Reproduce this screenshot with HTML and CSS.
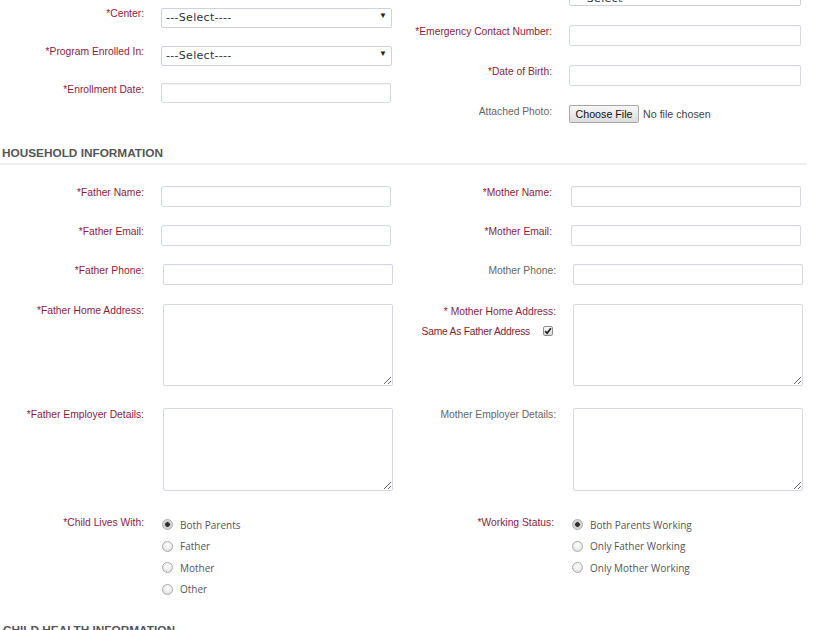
FILE: index.html
```html
<!DOCTYPE html>
<html lang="en">
<head>
<meta charset="utf-8">
<title>Enrollment Form</title>
<link rel="stylesheet" href="styles.css">
</head>
<body>
<div class="page">
  <section class="top">
    <div class="col col-l">
      <div class="field f-l">
        <label class="lbl">*Center:</label>
        <div class="select"><select><option>---Select----</option></select></div>
      </div>
      <div class="field f-l">
        <label class="lbl">*Program Enrolled In:</label>
        <div class="select"><select><option>---Select----</option></select></div>
      </div>
      <div class="field f-l">
        <label class="lbl">*Enrollment Date:</label>
        <input class="input h20" type="text">
      </div>
    </div>
    <div class="col col-r">
      <div class="field f-rt">
        <label class="lbl"></label>
        <div class="select wide low"><select><option>---Select----</option></select></div>
      </div>
      <div class="field f-rt">
        <label class="lbl">*Emergency Contact Number:</label>
        <input class="input wide" type="text">
      </div>
      <div class="field f-rt">
        <label class="lbl">*Date of Birth:</label>
        <input class="input wide" type="text">
      </div>
      <div class="field f-rt">
        <label class="lbl opt">Attached Photo:</label>
        <div class="file">
          <button class="file-btn" type="button">Choose File</button>
          <span class="file-none">No file chosen</span>
        </div>
      </div>
    </div>
  </section>

  <h3 class="sec-title">HOUSEHOLD INFORMATION</h3>

  <section class="household">
    <div class="pair p-name">
      <div class="field f-l"><label class="lbl">*Father Name:</label><input class="input" type="text"></div>
      <div class="field f-rn"><label class="lbl">*Mother Name:</label><input class="input" type="text"></div>
    </div>
    <div class="pair p-email">
      <div class="field f-l"><label class="lbl">*Father Email:</label><input class="input" type="text"></div>
      <div class="field f-rn"><label class="lbl">*Mother Email:</label><input class="input" type="text"></div>
    </div>
    <div class="pair p-phone">
      <div class="field f-l2"><label class="lbl">*Father Phone:</label><input class="input" type="text"></div>
      <div class="field f-rp"><label class="lbl opt">Mother Phone:</label><input class="input" type="text"></div>
    </div>
    <div class="pair p-addr">
      <div class="field f-l2"><label class="lbl">*Father Home Address:</label><textarea class="ta"></textarea></div>
      <div class="field f-rp">
        <div class="lbl lbl-stack">
          <label>* Mother Home Address:</label>
          <div class="same">
            <span>Same As Father Address</span>
            <span class="chk" role="checkbox" aria-checked="true"><svg width="8" height="8" viewBox="0 0 8 8"><path d="M1.2 4.1 L3.1 6.2 L6.9 1.2" fill="none" stroke="#1e1e1e" stroke-width="1.7"/></svg></span>
          </div>
        </div>
        <textarea class="ta"></textarea>
      </div>
    </div>
    <div class="pair p-emp">
      <div class="field f-l2"><label class="lbl">*Father Employer Details:</label><textarea class="ta ta-emp"></textarea></div>
      <div class="field f-rp"><label class="lbl opt">Mother Employer Details:</label><textarea class="ta ta-emp"></textarea></div>
    </div>
    <div class="pair p-status">
      <div class="field f-ls">
        <label class="lbl">*Child Lives With:</label>
        <div class="radios">
          <label class="ropt"><input type="radio" name="lives" checked><span>Both Parents</span></label>
          <label class="ropt"><input type="radio" name="lives"><span>Father</span></label>
          <label class="ropt"><input type="radio" name="lives"><span>Mother</span></label>
          <label class="ropt"><input type="radio" name="lives"><span>Other</span></label>
        </div>
      </div>
      <div class="field f-rs">
        <label class="lbl">*Working Status:</label>
        <div class="radios">
          <label class="ropt"><input type="radio" name="work" checked><span>Both Parents Working</span></label>
          <label class="ropt"><input type="radio" name="work"><span>Only Father Working</span></label>
          <label class="ropt"><input type="radio" name="work"><span>Only Mother Working</span></label>
        </div>
      </div>
    </div>
  </section>

  <h3 class="sec-title sec-next">CHILD HEALTH INFORMATION</h3>
</div>
</body>
</html>
```

FILE: styles.css
```css
* { box-sizing: border-box; }

html, body {
  margin: 0;
  background: #fff;
  font-family: "Liberation Sans", Arial, sans-serif;
}

.page {
  width: 825px;
  height: 630px;
  overflow: hidden;
  padding-top: 7px;
}

/* ---------- top section ---------- */
.top {
  display: flex;
  align-items: flex-start;
}

.col {
  display: flex;
  flex-direction: column;
}

.col-l {
  width: 410px;
  flex: none;
  gap: 18px;
}

.col-r {
  margin-top: -21px;
  gap: 19px;
}

/* ---------- field rows ---------- */
.field {
  display: flex;
  align-items: flex-start;
}

.lbl {
  flex: none;
  text-align: right;
  font-size: 10.3px;
  line-height: 12px;
  padding-top: 1px;
  color: #8c1c3c;
  white-space: nowrap;
}

.lbl.opt { color: #666; }

.f-l  { gap: 17px; }
.f-l  > .lbl { width: 144px; }
.f-l2 { gap: 19px; }
.f-l2 > .lbl { width: 144px; }
.f-ls { gap: 18px; }
.f-ls > .lbl { width: 144px; }

.f-rt { gap: 17px; }
.f-rt > .lbl { width: 142px; }
.f-rn { gap: 19px; }
.f-rn > .lbl { width: 142px; }
.f-rp { gap: 17px; }
.f-rp > .lbl { width: 146px; }
.f-rs { gap: 18px; }
.f-rs > .lbl { width: 144px; }

/* ---------- controls ---------- */
.input {
  width: 230px;
  height: 21px;
  margin: 0;
  padding: 2px 4px;
  border: 1px solid #d3d8e2;
  border-radius: 2px;
  background: #fff;
  box-shadow: inset 0 1px 1px rgba(0, 0, 0, 0.03);
  font: 11px "Liberation Sans", Arial, sans-serif;
}

.input.h20 { height: 20px; }
.input.wide { width: 232px; }

.select {
  position: relative;
  width: 231px;
  height: 20px;
}

.select.wide { width: 232px; }

.select select {
  appearance: none;
  -webkit-appearance: none;
  width: 100%;
  height: 100%;
  margin: 0;
  padding: 0 0 0 4px;
  border: 1px solid #cdd1da;
  border-radius: 2px;
  background: #fff;
  color: #333;
  font: 11px "DejaVu Sans", Verdana, sans-serif;
  letter-spacing: 0.3px;
}

.select.low select {
  padding-top: 5px;
}

.select::after {
  content: "\25BC";
  position: absolute;
  right: 5px;
  top: 5px;
  font-size: 8px;
  line-height: 8px;
  color: #222;
  pointer-events: none;
}

.select.low::after { content: none; }

.file {
  display: flex;
  align-items: center;
  gap: 4px;
}

.file-btn {
  width: 70px;
  height: 18px;
  margin: 0;
  padding: 0;
  border: 1px solid #a6a6a6;
  border-radius: 2px;
  background: linear-gradient(#f7f7f7, #dddddd);
  color: #111;
  font: 10.7px "Liberation Sans", Arial, sans-serif;
}

.file-none {
  font-size: 10.7px;
  color: #444;
}

.ta {
  width: 230px;
  height: 82px;
  margin: 0;
  padding: 2px 4px;
  border: 1px solid #d3d8e2;
  border-radius: 2px;
  background: #fff;
  font: 11px "Liberation Sans", Arial, sans-serif;
}

.ta-emp { height: 83px; }

/* ---------- headings ---------- */
.sec-title {
  width: 807px;
  margin: 23px 0 0;
  padding: 0 0 3px 2px;
  font: bold 11.8px/14px "Liberation Sans", Arial, sans-serif;
  color: #555;
  border-bottom: 2px solid #f0f0f0;
}

.sec-next {
  padding-left: 3px;
}

/* ---------- household rows ---------- */
.pair {
  display: grid;
  grid-template-columns: 410px 1fr;
}

.p-name   { margin-top: 21px; }
.p-email  { margin-top: 18px; }
.p-phone  { margin-top: 18px; }
.p-addr   { margin-top: 19px; }
.p-emp    { margin-top: 22px; }
.p-status { margin-top: 23px; }

.p-status .lbl { padding-top: 3px; }

.lbl-stack {
  display: flex;
  flex-direction: column;
  align-items: flex-end;
  padding-top: 2px;
}

.same {
  display: flex;
  align-items: center;
  margin-top: 8px;
  font-size: 10.3px;
  letter-spacing: -0.25px;
  color: #7e1f33;
}

.chk {
  display: inline-flex;
  align-items: center;
  justify-content: center;
  width: 10px;
  height: 10px;
  margin: -2px 3px 0 13px;
  border: 1px solid #8d8d8d;
  border-radius: 2px;
  background: linear-gradient(#fbfbfb, #d9d9d9);
}

/* ---------- radios ---------- */
.radios {
  display: flex;
  flex-direction: column;
}

.ropt {
  display: flex;
  align-items: center;
  height: 21.5px;
  gap: 7px;
  font: 10px "Open Sans", sans-serif;
  color: #555;
}

.ropt input {
  appearance: none;
  -webkit-appearance: none;
  flex: none;
  width: 11px;
  height: 11px;
  margin: 0;
  border: 1px solid #ababab;
  border-radius: 50%;
  background: radial-gradient(circle at 50% 35%, #ffffff 0, #f2f2f2 40%, #d6d6d6 100%);
}

.ropt input:checked {
  background: radial-gradient(circle, #2e2e2e 0, #2e2e2e 2px, #c9c9c9 2.6px, #f0f0f0 100%);
}
```
